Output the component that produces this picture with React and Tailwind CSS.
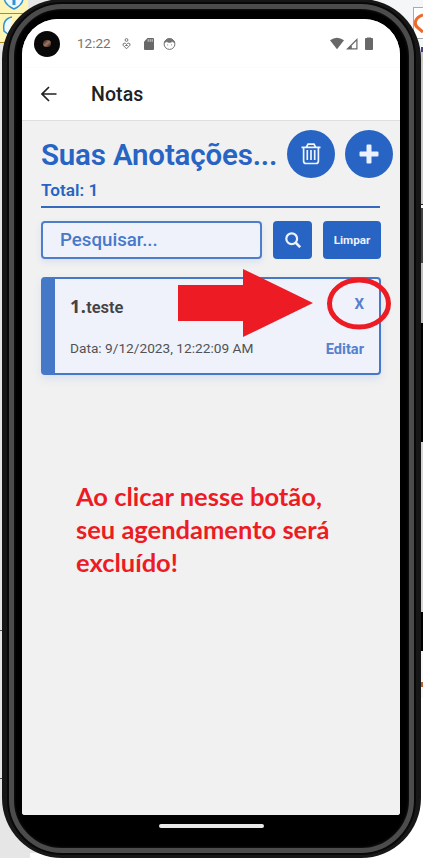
import React from "react";

function StatusBar() {
  return (
    <div className="flex h-[49px] shrink-0 items-center bg-white pl-[12px] pr-[27px] text-[#747474]">
      <div className="flex h-[26px] w-[26px] items-center justify-center rounded-full bg-[#080808]">
        <div className="h-[7px] w-[8px] rounded-full bg-gradient-to-br from-[#201515] via-[#a47a5e] to-[#241a1a]" />
      </div>
      <span className="ml-[17px] w-[33px] whitespace-nowrap text-[13.5px] leading-none">12:22</span>
      <svg className="ml-[12px]" width="9" height="12" viewBox="0 0 9 12" fill="none" stroke="currentColor" strokeWidth="1">
        <circle cx="4.5" cy="2" r="1.4" />
        <path d="M4.5 10.8 1 7.2q-.4-1.7 1.2-2Q3.8 5 4.5 6.5 5.2 5 6.8 5.2q1.6.3 1.2 2Z" />
        <path d="M3.2 7.5h2.6" />
      </svg>
      <svg className="ml-[13px]" width="10" height="12" viewBox="0 0 10 12" fill="#686868">
        <path d="M3.5 0H9a1 1 0 0 1 1 1v10a1 1 0 0 1-1 1H1a1 1 0 0 1-1-1V3.7Z" />
        <path d="M4.2 1.2v2.6M6.2 1.2v2.6M8.2 1.2v2.6" stroke="#eee" strokeWidth=".8" />
      </svg>
      <svg className="ml-[9px]" width="13" height="12" viewBox="0 0 13 12" fill="none" stroke="#747474" strokeWidth="1">
        <circle cx="6.5" cy="6" r="5.4" />
        <path d="M1.5 4.4C2.4 1.7 4.2.8 6.5.8s4.1.9 5 3.6L9.4 3.6l-2.9.8-3-.8Z" fill="#747474" />
        <path d="M4.3 6.9h.8M8 6.9h.8" />
      </svg>
      <svg className="ml-auto" width="43" height="14" viewBox="0 0 43 14" fill="#686868">
        <path d="M0 3.3Q7-2 14 3.3L7 12.2Z" />
        <path d="M16 12.5 27.5 1v11.5Z" />
        <path d="M21.8 8.4 26.3 3.9v7.4h-4.5Z" fill="white" />
        <path d="M37 1V.4h4V1h1.1q.9 0 .9.9v10.2q0 .9-.9.9h-6.2q-.9 0-.9-.9V1.9q0-.9.9-.9Z" />
      </svg>
    </div>
  );
}

function Navigation() {
  return (
    <div className="flex h-[53px] shrink-0 items-center border-b border-[#dfdfdf] bg-white pl-[19px] text-[#202124] shadow-[0_1px_2px_#d4d4d4]">
      <svg width="16" height="16" viewBox="0 0 16 16" fill="none" stroke="currentColor" strokeWidth="1.7">
        <path d="M15.5 8H1.5M8 1 1 8l7 7" />
      </svg>
      <h1 className="ml-[34px] pt-[2px] text-[19.5px] font-medium leading-none tracking-[.1px]">Notas</h1>
    </div>
  );
}

function NoteCard() {
  return (
    <article className="relative mt-[18px] h-[98px] w-[340px] rounded-[4px] border-2 border-l-[14px] border-[#4678c8] bg-[#eff2fa] pl-[15px] pr-[15px] shadow-[0_4px_8px_#d9e0ee]">
      <div className="flex h-[56px] items-center justify-between">
        <div className="flex items-baseline font-medium text-[#424347]">
          <span className="font-['Noto_Sans'] text-[18px] font-bold leading-none tracking-[.4px]">1.</span>
          <span className="text-[16.5px] font-semibold leading-none">teste</span>
        </div>
        <button className="pb-[5px] text-[15px] font-bold leading-none text-[#5580ce]">X</button>
      </div>
      <div className="flex h-[28px] items-center justify-between">
        <span className="whitespace-nowrap text-[13.7px] leading-none text-[#515257]">Data: 9/12/2023, 12:22:09 AM</span>
        <button className="text-[14.6px] font-bold leading-none text-[#5580ce]">Editar</button>
      </div>
      <svg className="absolute left-[123px] top-[-12px]" width="215" height="72" viewBox="0 0 215 72">
        <path d="M0 18h65V2l70 34-70 34V54H0Z" fill="#ed1c24" />
        <ellipse cx="181" cy="36.5" rx="29.5" ry="23.5" fill="none" stroke="#ed1c24" strokeWidth="5" />
      </svg>
    </article>
  );
}

function NotesPage() {
  return (
    <main className="flex-1 overflow-hidden bg-[#f1f1f1] pl-[19px] pt-[8px]">
      <div className="flex h-[49px] items-center text-[#2764c3]">
        <h2 className="w-[246px] whitespace-nowrap pt-[5px] text-[29.5px] font-semibold leading-none tracking-[-.18px]">Suas Anotações...</h2>
        <button className="flex h-[48px] w-[48px] items-center justify-center rounded-full bg-[#2764c3] text-[#eef3ff]">
          <svg width="20" height="22" viewBox="0 0 20 22" fill="none" stroke="currentColor" strokeWidth="1.7">
            <path d="M.5 4.3h19M5.5 4 7 1.2h6L14.5 4M2.6 4v14q0 2.5 2.4 2.5h10q2.4 0 2.4-2.5V4M6.3 7v10M10 7v10M13.7 7v10" />
          </svg>
        </button>
        <button className="ml-[10px] flex h-[48px] w-[48px] items-center justify-center rounded-full bg-[#2764c3]">
          <svg width="20" height="20" viewBox="0 0 20 20" fill="#eaf1ff">
            <path d="M8.5.5h3a1 1 0 0 1 1 1v6h6a1 1 0 0 1 1 1v3a1 1 0 0 1-1 1h-6v6a1 1 0 0 1-1 1h-3a1 1 0 0 1-1-1v-6h-6a1 1 0 0 1-1-1v-3a1 1 0 0 1 1-1h6v-6a1 1 0 0 1 1-1Z" />
          </svg>
        </button>
      </div>
      <div className="h-[30px] w-[339px] border-b-2 border-[#3569bd] pt-[4px] text-[17.2px] font-semibold leading-[17px] text-[#2764c3]">Total: 1</div>
      <div className="mt-[13px] flex h-[38px] w-[340px]">
        <div className="flex w-[221px] items-center rounded-[4px] border-2 border-[#4d7dcb] bg-[#eff2fa] pl-[17px] pt-[1px] text-[18.7px] font-medium text-[#4878c9] shadow-[0_3px_7px_#d9e0ee]">Pesquisar...</div>
        <button className="ml-[11px] flex w-[39px] items-center justify-center rounded-[4px] bg-[#2764c3]">
          <svg width="16" height="16" viewBox="0 0 16 16" fill="none" stroke="#eaf1ff" strokeWidth="2.2">
            <circle cx="6.7" cy="6.7" r="5.4" />
            <path d="m10.5 10.5 4.7 4.7" strokeWidth="2.6" />
          </svg>
        </button>
        <button className="ml-[11px] flex w-[58px] items-center justify-center rounded-[4px] bg-[#2764c3] pt-[2px] text-[11.7px] font-bold text-[#eaf1ff]">Limpar</button>
      </div>
      <NoteCard />
      <p className="ml-[35px] mt-[105px] whitespace-nowrap font-['Lato'] text-[25.5px] font-bold leading-[33px] text-[#ed1c24]">
        Ao clicar nesse botão,<br />seu agendamento será<br />excluído!
      </p>
    </main>
  );
}

function Backdrop() {
  return (
    <div className="absolute inset-0 flex justify-between">
      <div className="flex w-[60px] flex-col bg-[#e6e6e6]">
        <div className="flex h-[43px] w-[28px] flex-col border-b border-[#ad8b20] bg-[#fff5b5]">
          <svg width="28" height="42" viewBox="0 0 28 42" fill="none" stroke="#3194d0" strokeWidth="1.5">
            <path d="M4-2Q5 5 14 9q9-4 9-11" fill="#eef8ff" />
            <path d="M14-1v6" strokeWidth="3" />
            <path d="M0 13.5h28" stroke="#ad8b20" strokeWidth="1" />
            <path d="M12 17q-10 2-8 14l5 4" fill="#eef8ff" />
          </svg>
        </div>
        <div className="mt-[587px] h-px w-[2px] bg-[#555]" />
        <div className="mt-[147px] h-px w-[2px] bg-[#555]" />
        <div className="ml-[30px] mt-auto h-[5px] bg-white" />
      </div>
      <div className="flex w-[50px] flex-col bg-[#f5f6f7]">
        <div className="ml-auto mt-[7px] flex h-[32px] w-[10px] items-center overflow-hidden border-b border-l border-t border-[#aaa] bg-white">
          <svg width="10" height="24" viewBox="0 0 10 24" fill="none" stroke="#ed6a2c" strokeWidth="3.5">
            <path d="M10 3C0 6 0 14 4 17l6 5" />
          </svg>
        </div>
        <div className="ml-auto mt-[8px] h-[5px] w-[2px] bg-[#513a80]" />
        <div className="ml-auto h-[152px] w-[3px] bg-[#c8c8c8]" />
        <div className="ml-auto h-px w-[3px] bg-[#222]" />
        <div className="ml-auto mt-[3px] h-[55px] w-[3px] bg-[#444]" />
        <div className="ml-auto h-[60px] w-[3px] bg-[#bdbdbd]" />
        <div className="ml-auto h-[119px] w-[3px] bg-black" />
        <div className="ml-auto h-[170px] w-[3px] bg-[#d5d5d5]" />
        <div className="ml-auto h-[39px] w-[2px] bg-black" />
        <div className="ml-auto mt-[31px] h-[5px] w-[2px] bg-[#b95d38]" />
        <div className="mt-auto h-[160px] bg-white" />
      </div>
    </div>
  );
}

export default function App() {
  return (
    <div className="relative h-[858px] w-[423px] overflow-hidden bg-white font-['Roboto',sans-serif]">
      <Backdrop />
      <div className="relative -mt-px ml-[2px] h-[859px] w-[419px] rounded-[60px] border-x-[7px] border-y-[5px] border-[#171717] bg-[#080808] shadow-[inset_0_0_0_1px_#080808]">
        <div className="h-full rounded-[53px] border-[5px] border-[#4c4c4c] bg-black px-[8px] pb-[34px] pt-[10px] shadow-[0_0_0_2px_#080808,inset_0_0_3px_#222]">
          <div className="flex h-[796px] w-[378px] flex-col overflow-hidden rounded-b-[3px] rounded-t-[36px] bg-[#f1f1f1]">
            <StatusBar />
            <Navigation />
            <NotesPage />
          </div>
          <div className="mx-auto mt-[9px] h-[4px] w-[105px] rounded-full bg-[#e8e8e8]" />
        </div>
      </div>
    </div>
  );
}
